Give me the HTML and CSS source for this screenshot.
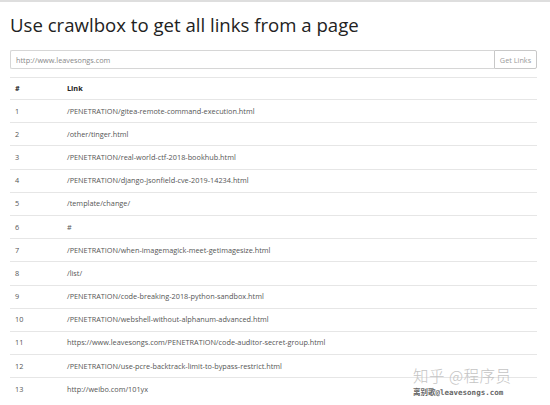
FILE: index.html
```html
<!DOCTYPE html>
<html>
<head>
    <title>crawlbox</title>
    <meta charset="utf-8">
    <link rel="stylesheet" href="styles.css">
</head>
<body>

<div class="container">
    <h1 class="title">Use crawlbox to get all links from a page</h1>

    <div class="search">
        <input type="text" class="search-input" placeholder="http://www.leavesongs.com">
        <button class="search-btn">Get Links</button>
    </div>

    <table class="links">
        <thead>
            <tr><th class="num">#</th><th>Link</th></tr>
        </thead>
        <tbody>
            <tr><td class="num">1</td><td>/PENETRATION/gitea-remote-command-execution.html</td></tr>
            <tr><td class="num">2</td><td>/other/tinger.html</td></tr>
            <tr><td class="num">3</td><td>/PENETRATION/real-world-ctf-2018-bookhub.html</td></tr>
            <tr><td class="num">4</td><td>/PENETRATION/django-jsonfield-cve-2019-14234.html</td></tr>
            <tr><td class="num">5</td><td>/template/change/</td></tr>
            <tr><td class="num">6</td><td>#</td></tr>
            <tr><td class="num">7</td><td>/PENETRATION/when-imagemagick-meet-getimagesize.html</td></tr>
            <tr><td class="num">8</td><td>/list/</td></tr>
            <tr><td class="num">9</td><td>/PENETRATION/code-breaking-2018-python-sandbox.html</td></tr>
            <tr><td class="num">10</td><td>/PENETRATION/webshell-without-alphanum-advanced.html</td></tr>
            <tr><td class="num">11</td><td>https://www.leavesongs.com/PENETRATION/code-auditor-secret-group.html</td></tr>
            <tr><td class="num">12</td><td>/PENETRATION/use-pcre-backtrack-limit-to-bypass-restrict.html</td></tr>
            <tr><td class="num">13</td><td>http://weibo.com/101yx</td></tr>
        </tbody>
    </table>
</div>

<div class="watermark">
    <div class="wm-top">知乎 @程序员</div>
    <div class="wm-bottom">离别歌@leavesongs.com</div>
</div>

</body>
</html>
```

FILE: styles.css
```css
html, body {
    margin: 0;
    padding: 0;
}
body {
    font-family: 'Open Sans', 'Noto Sans', sans-serif;
    color: #333;
    background: #fff;
    border-top: 2px solid #dedede;
    height: 403px;
    overflow: hidden;
    position: relative;
}
.container {
    padding: 0 13px 0 10px;
}
.title {
    font-size: 18.6px;
    font-weight: 500;
    color: #222;
    margin: 10px 0 0;
    line-height: 26px;
}
.search {
    display: flex;
    margin-top: 12px;
    height: 19px;
}
.search-input {
    flex: 1;
    box-sizing: border-box;
    height: 19px;
    margin: 0;
    border: 1px solid #d6d6d6;
    border-right: none;
    border-radius: 2px 0 0 2px;
    padding: 0 5px;
    font-family: inherit;
    font-size: 7.3px;
    outline: none;
}
.search-input::placeholder {
    color: #888;
}
.search-btn {
    box-sizing: border-box;
    width: 43px;
    height: 19px;
    margin: 0;
    padding: 0;
    border: 1px solid #c8c8c8;
    border-radius: 0 2px 2px 0;
    background: #fff;
    color: #999;
    font-family: inherit;
    font-size: 7.3px;
}
.links {
    width: 100%;
    border-collapse: collapse;
    margin-top: 8px;
    font-size: 7.3px;
    line-height: 11px;
}
.links th, .links td {
    text-align: left;
    padding: 5.6px 5px;
    border-top: 1px solid #e6e6e6;
    vertical-align: top;
}
.links th {
    color: #222;
    font-weight: 700;
    padding: 5px 5px;
}
.links td {
    color: #555;
}
.links .num {
    width: 42px;
}
.watermark {
    position: absolute;
    left: 413px;
    top: 364px;
}
.wm-top {
    font-family: 'Noto Sans CJK SC', sans-serif;
    font-weight: 300;
    font-size: 15.5px;
    line-height: 19px;
    color: #c4c4c4;
    letter-spacing: 0.5px;
    white-space: nowrap;
}
.wm-bottom {
    font-family: 'DejaVu Sans Mono', 'Noto Sans CJK SC', monospace;
    font-weight: 700;
    font-size: 7.5px;
    line-height: 10px;
    margin-top: 3px;
    color: #666;
    white-space: nowrap;
}
```
